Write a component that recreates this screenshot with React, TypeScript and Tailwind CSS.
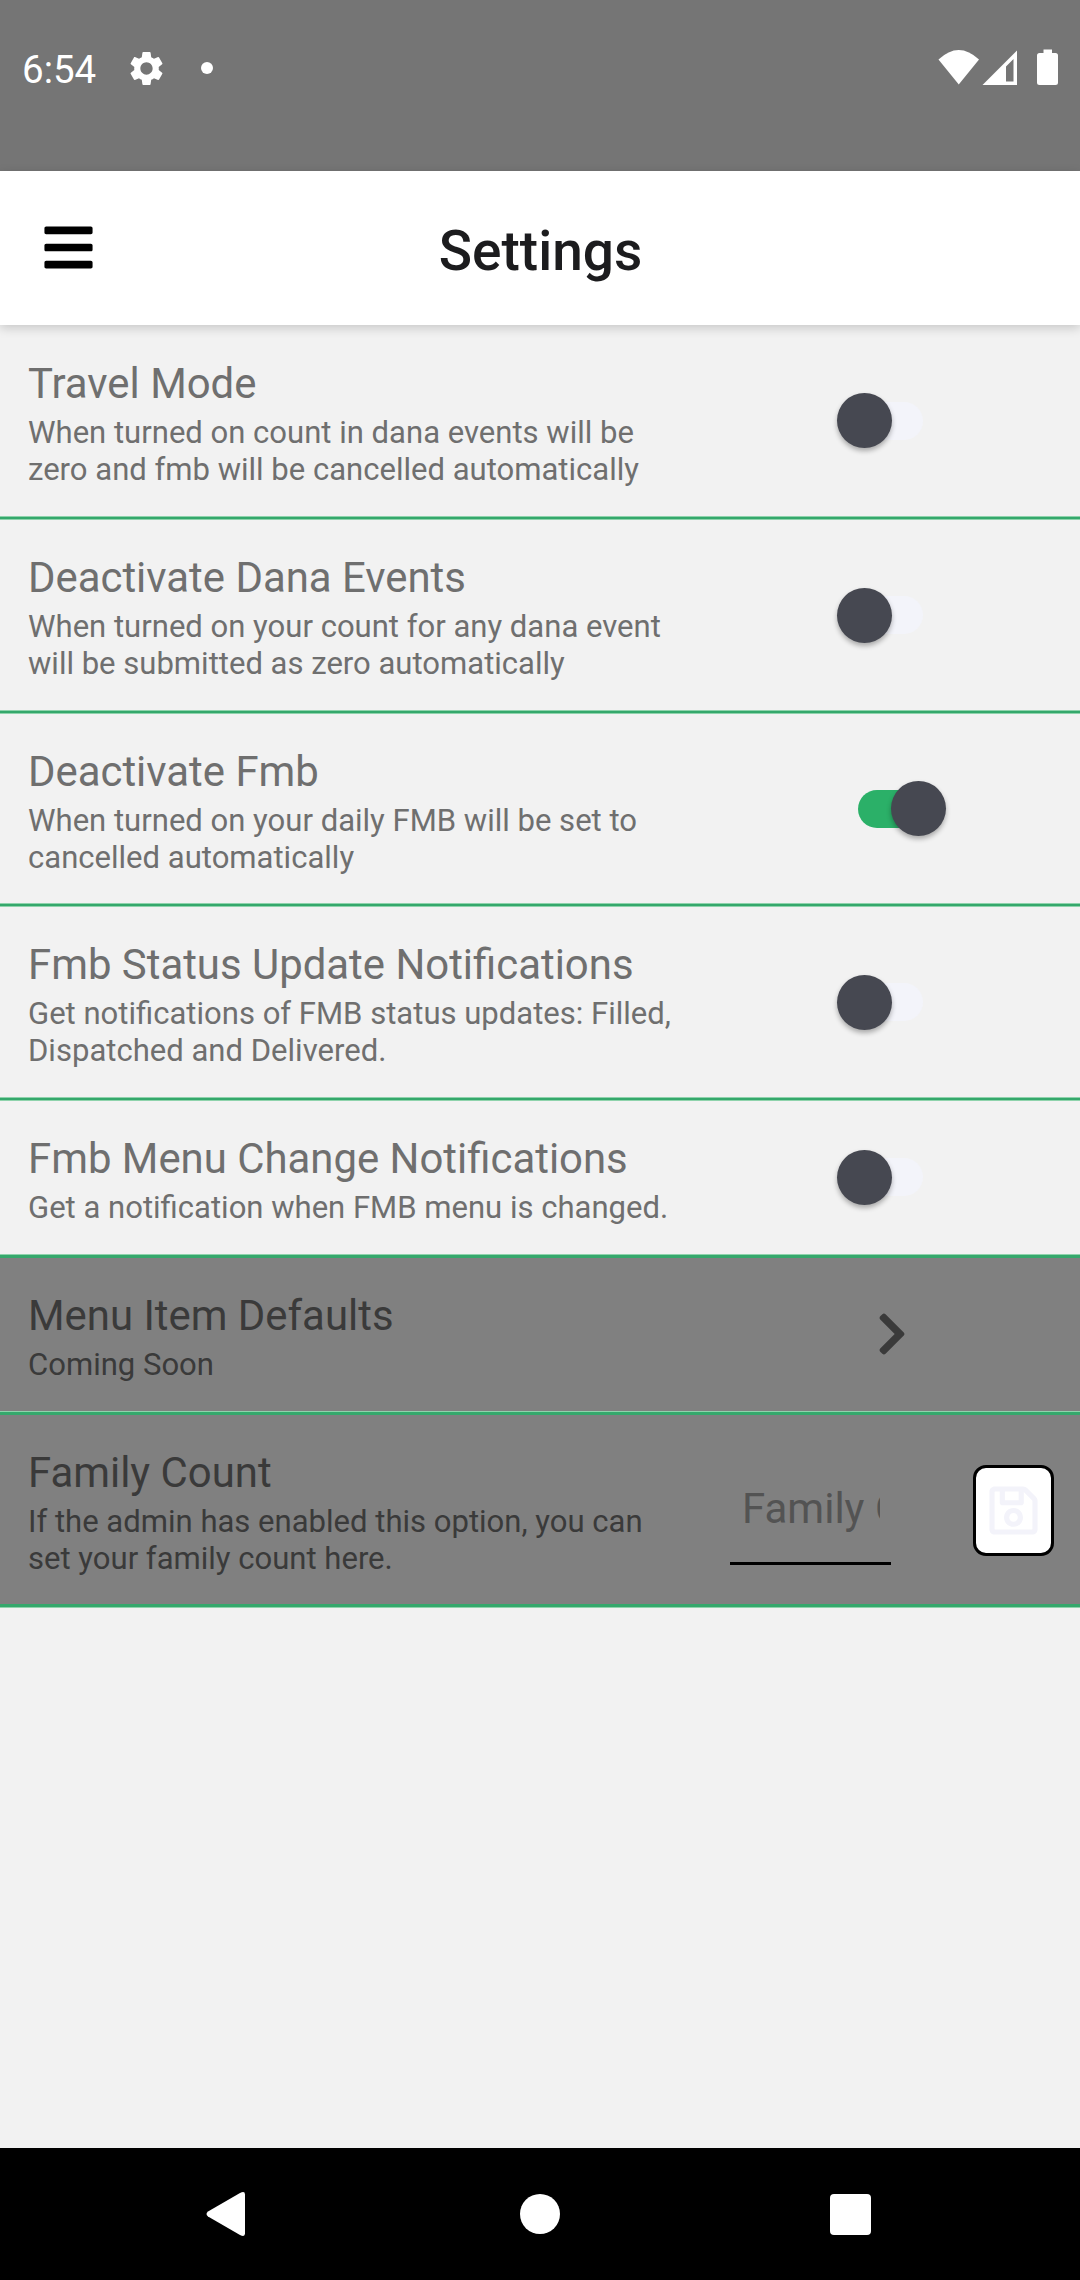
import type { ReactNode } from "react";
import { FaBars, FaChevronRight, FaRegSave } from "react-icons/fa";
import { MdSettings } from "react-icons/md";

function Toggle({ on = false }: { on?: boolean }) {
  return on ? (
    <div className="relative ml-[858px] h-[38px] w-[80px] rounded-full bg-[#2bb068]">
      <div className="absolute -top-[8.5px] left-[32.5px] size-[55px] rounded-full bg-[#464851] shadow-[0_3px_5px_rgba(0,0,0,0.3)]" />
    </div>
  ) : (
    <div className="relative ml-[845px] h-[38px] w-[78px] rounded-full bg-[#f3f4fa]">
      <div className="absolute -top-[8.5px] -left-[8.5px] size-[55px] rounded-full bg-[#464851] shadow-[0_3px_5px_rgba(0,0,0,0.3)]" />
    </div>
  );
}

type RowProps = {
  title: string;
  lines: string[];
  height: string;
  pad?: string;
  divider?: string;
  disabled?: boolean;
  children: ReactNode;
};

function Row({
  title,
  lines,
  height,
  pad = "pt-[34px]",
  divider = "border-y border-[#8fd3ac]",
  disabled = false,
  children,
}: RowProps) {
  return (
    <section className={`${height} flex flex-col ${disabled ? "bg-[#808080] text-[#3a3a3a]" : "text-[#6f6f6f]"}`}>
      <div className="grid flex-1 items-center">
        <div className={`col-start-1 row-start-1 self-start pl-[28px] ${pad}`}>
          <h2 className="mb-[5px] text-[41.9px] leading-[50px]">{title}</h2>
          {lines.map((l) => (
            <p key={l} className="text-[31.05px] leading-[37px] whitespace-nowrap">{l}</p>
          ))}
        </div>
        <div className="col-start-1 row-start-1">{children}</div>
      </div>
      <div className={`h-1 bg-[#35a86c] ${divider}`} />
    </section>
  );
}

export default function App() {
  return (
    <div className="flex h-[2280px] w-[1080px] flex-col overflow-hidden bg-[#f2f2f2] font-['Roboto',sans-serif]">
      <div className="flex h-[171px] shrink-0 items-start justify-between bg-[#757575] text-white">
        <div className="flex h-[136px] items-center pl-[22px]">
          <span className="w-[104px] pt-[3px] text-[38.5px]">6:54</span>
          <MdSettings className="size-[41px]" />
          <span className="ml-[34px] size-3 rounded-full bg-white" />
        </div>
        <svg className="mt-[48px] mr-[20px] h-[40px] w-[124px]" viewBox="0 0 124 40" fill="white">
          <path d="M2.500 11.500Q22.750 -7.500 43 11.500L22.750 36.500Z" />
          <path fillRule="evenodd" d="M46.500 37L81 2.500V37ZM70 33.500H77.500V11L70 18.500Z" />
          <path d="M107.500 1.500H116V5H119.500Q122 5 122 7.500V34.500Q122 37 119.500 37H103.500Q101 37 101 34.500V7.500Q101 5 103.500 5H107.500Z" />
        </svg>
      </div>

      <header className="z-10 grid h-[154px] shrink-0 grid-cols-3 items-center bg-white shadow-[0_3px_10px_rgba(0,0,0,0.18)]">
        <FaBars className="mb-[2px] ml-[41px] size-[55px] text-black" />
        <h1 className="pt-[6px] pl-px text-center text-[55px] font-medium text-[#1c1c1e]">Settings</h1>
      </header>

      <main className="flex-1">
        <Row height="h-[195px]" title="Travel Mode" lines={["When turned on count in dana events will be", "zero and fmb will be cancelled automatically"]}>
          <Toggle />
        </Row>
        <Row height="h-[194px]" pad="pt-[33px]" title="Deactivate Dana Events" lines={["When turned on your count for any dana event", "will be submitted as zero automatically"]}>
          <Toggle />
        </Row>
        <Row height="h-[193px]" pad="pt-[33px]" title="Deactivate Fmb" lines={["When turned on your daily FMB will be set to", "cancelled automatically"]}>
          <Toggle on />
        </Row>
        <Row height="h-[194px]" pad="pt-[33px]" title="Fmb Status Update Notifications" lines={["Get notifications of FMB status updates: Filled,", "Dispatched and Delivered."]}>
          <Toggle />
        </Row>
        <Row
          height="h-[157px]"
          pad="pt-[33px]"
          divider="border-t border-[#8fd3ac]"
          title="Fmb Menu Change Notifications"
          lines={["Get a notification when FMB menu is changed."]}
        >
          <div className="pb-px">
            <Toggle />
          </div>
        </Row>
        <Row
          height="h-[157px]"
          pad="pt-[33px]"
          divider="border-t border-[#8fd3ac]"
          title="Menu Item Defaults"
          lines={["Coming Soon"]}
          disabled
        >
          <FaChevronRight className="mb-px ml-[867.5px] h-[48px] w-[48px]" />
        </Row>
        <Row
          height="h-[193px]"
          pad="pt-[33px]"
          divider="border-b border-[#8fd3ac]"
          title="Family Count"
          lines={["If the admin has enabled this option, you can", "set your family count here."]}
          disabled
        >
          <div className="flex items-center pt-px">
            <div className="ml-[730px] flex h-[110px] w-[161px] items-center border-b-[3px] border-black pr-[11px] pl-[12px]">
              <span className="overflow-hidden text-[42px] whitespace-nowrap text-[#535353]">Family Count</span>
            </div>
            <button className="ml-[82px] flex h-[91px] w-[81px] items-center justify-center rounded-[13px] border-[3px] border-black bg-white text-[#f3f3fa]">
              <FaRegSave className="size-[55px]" />
            </button>
          </div>
        </Row>
      </main>

      <nav className="flex h-[132px] shrink-0 items-center bg-black">
        <svg className="ml-[205px] h-[48px] w-[44px]" viewBox="0 0 44 48" fill="white">
          <path d="M3 21.500L35 3Q40 0.500 40 4.500V43.500Q40 47.500 35 45L3 26.500Q0 24 3 21.500Z" />
        </svg>
        <div className="ml-[271px] size-[40px] rounded-full bg-white" />
        <div className="ml-[270px] size-[41px] rounded-[4px] bg-white" />
      </nav>
    </div>
  );
}
